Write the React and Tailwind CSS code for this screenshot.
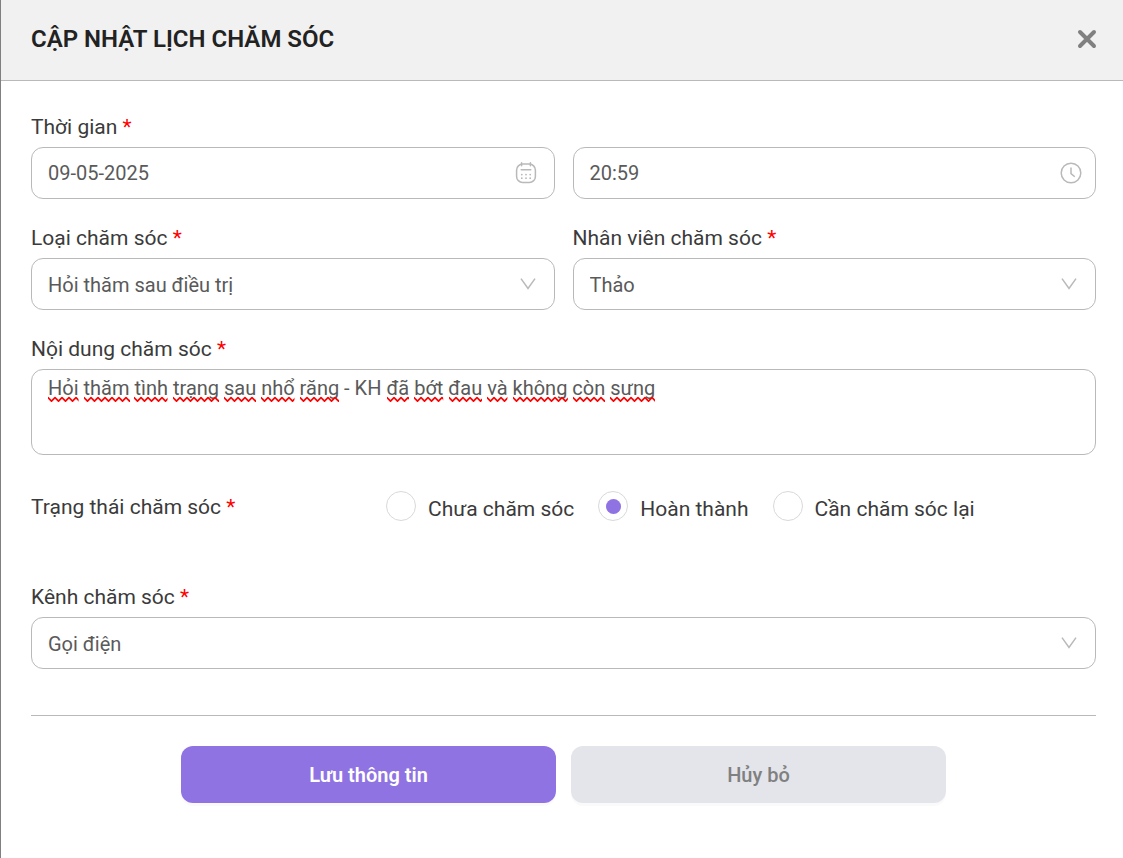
import React, { useState } from 'react';
import { clsx } from 'clsx';

const FIELD = 'block w-full rounded-xl border border-[#b9b9b9] bg-white px-4 text-[20px] text-[#5a5a5a] outline-none focus:border-[#8f73e3]';

const STATUSES = [
  { id: 'pending', label: 'Chưa chăm sóc' },
  { id: 'done', label: 'Hoàn thành' },
  { id: 'again', label: 'Cần chăm sóc lại' }
];

const CalendarIcon = () => (
  <svg width="22" height="22" viewBox="0 0 22 22" fill="none" stroke="#b9b9b9" strokeLinecap="round">
    <rect x="1.6" y="2.1" width="18.8" height="18.3" rx="6" strokeWidth="1.5" />
    <path d="M6.6 0.8v3M15.4 0.8v3M6.2 7.8h9.6" strokeWidth="1.5" />
    <path d="M6.8 12.6h.01M11 12.6h.01M15.2 12.6h.01M6.8 16.2h.01M11 16.2h.01M15.2 16.2h.01" strokeWidth="1.8" />
  </svg>
);

const ClockIcon = () => (
  <svg width="22" height="22" viewBox="0 0 22 22" fill="none" stroke="#b9b9b9" strokeWidth="1.5">
    <circle cx="11" cy="11" r="9.8" />
    <path d="M11 5.4v6.2l3.8 3.2" />
  </svg>
);

const Label = ({ htmlFor, children }) => (
  <label htmlFor={htmlFor} className="mb-2 block text-[21px] leading-6 text-[#3b3b3b]">
    {children} <span className="text-[#ff0000]">*</span>
  </label>
);

const SelectField = ({ id, label, options }) => (
  <div>
    <Label htmlFor={id}>{label}</Label>
    <div className="relative">
      <select id={id} className={clsx(FIELD, 'h-[52px] appearance-none pt-0.5 pr-12')}>
        {options.map(o => <option key={o}>{o}</option>)}
      </select>
      <svg className="pointer-events-none absolute top-5 right-[19px]" width="16" height="12" viewBox="0 0 16 12" fill="none" stroke="#b9b9b9" strokeWidth="1.5">
        <path d="M1 0.6L8 10.4L15 0.6" />
      </svg>
    </div>
  </div>
);

const Squiggle = () => (
  <svg className="absolute -bottom-[3px] left-0 h-[7px] w-full">
    <rect width="100%" height="7" fill="url(#squiggle)" />
  </svg>
);

const NoteField = ({ value, onChange }) => (
  <div className="relative">
    <textarea
      id="note"
      value={value}
      onChange={(e) => onChange(e.target.value)}
      spellCheck={false}
      className={clsx(FIELD, 'h-[86px] resize-none pt-1 leading-7')}
    />
    <svg className="absolute size-0" aria-hidden="true">
      <pattern id="squiggle" width="7" height="7" patternUnits="userSpaceOnUse">
        <path d="M-3.5 5.2L0 1.6L3.5 5.2L7 1.6L10.5 5.2" fill="none" stroke="#ff0000" strokeWidth="1.7" strokeLinejoin="round" />
      </pattern>
    </svg>
    {/* spelling marks, skips punctuation and upper-case abbreviations */}
    <div aria-hidden="true" className="pointer-events-none absolute inset-0 border border-transparent px-4 pt-1 text-[20px] leading-7 whitespace-pre-wrap text-transparent">
      {value.split(' ').map((word, i) => (
        <React.Fragment key={i}>
          {i > 0 && ' '}
          <span className="relative">
            {word}
            {word !== word.toUpperCase() && <Squiggle />}
          </span>
        </React.Fragment>
      ))}
    </div>
  </div>
);

const App = () => {
  const [date, setDate] = useState('09-05-2025');
  const [time, setTime] = useState('20:59');
  const [note, setNote] = useState('Hỏi thăm tình trạng sau nhổ răng - KH đã bớt đau và không còn sưng');
  const [status, setStatus] = useState('done');

  return (
    <div className="min-h-screen border-l border-[#808080] bg-white font-['Roboto',sans-serif]">
      <header className="flex h-[81px] items-center justify-between border-b border-[#b9b9b9] bg-[#f1f1f1] pr-[26px] pb-[2px] pl-[30px]">
        <h1 className="text-[24px] leading-8 font-semibold text-[#222222]">CẬP NHẬT LỊCH CHĂM SÓC</h1>
        <button type="button" aria-label="Đóng">
          <svg width="20" height="20" viewBox="0 0 20 20" fill="none" stroke="#808080" strokeWidth="4" strokeLinecap="round">
            <path d="M3 3L17 17M17 3L3 17" />
          </svg>
        </button>
      </header>

      <form className="pt-[34px] pr-[27px] pb-14 pl-[30px]" onSubmit={(e) => e.preventDefault()}>
        <div className="grid grid-cols-2 items-end gap-x-[18px] gap-y-[27px]">
          <div>
            <Label htmlFor="date">Thời gian</Label>
            <div className="relative">
              <input id="date" type="text" value={date} onChange={(e) => setDate(e.target.value)} className={clsx(FIELD, 'h-[52px]')} />
              <span className="pointer-events-none absolute top-[15px] right-[18px]"><CalendarIcon /></span>
            </div>
          </div>
          <div className="relative">
            <input type="text" aria-label="Giờ" value={time} onChange={(e) => setTime(e.target.value)} className={clsx(FIELD, 'h-[52px]')} />
            <span className="pointer-events-none absolute top-[15px] right-[14px]"><ClockIcon /></span>
          </div>
          <SelectField id="type" label="Loại chăm sóc" options={['Hỏi thăm sau điều trị']} />
          <SelectField id="staff" label="Nhân viên chăm sóc" options={['Thảo']} />
          <div className="col-span-2">
            <Label htmlFor="note">Nội dung chăm sóc</Label>
            <NoteField value={note} onChange={setNote} />
          </div>
        </div>

        <fieldset className="mt-9 mb-16 grid grid-cols-3">
          <legend className="float-left pt-1 text-[21px] leading-6 text-[#3b3b3b]">
            Trạng thái chăm sóc <span className="text-[#ff0000]">*</span>
          </legend>
          <div className="col-span-2 flex gap-6">
            {STATUSES.map(s => (
              <label key={s.id} className="flex items-center gap-3 text-[21px] leading-6 text-[#3b3b3b]">
                <input
                  type="radio"
                  name="status"
                  checked={status === s.id}
                  onChange={() => setStatus(s.id)}
                  className="grid size-[30px] appearance-none place-items-center rounded-full border border-[#d9d9d9] before:size-[15px] before:rounded-full checked:before:bg-[#8f73e3]"
                />
                <span className="pt-[6px]">{s.label}</span>
              </label>
            ))}
          </div>
        </fieldset>

        <SelectField id="channel" label="Kênh chăm sóc" options={['Gọi điện']} />

        <div className="mt-[46px] flex justify-center gap-[15px] border-t border-[#b9b9b9] pt-[30px]">
          <button type="submit" className="h-[57px] w-full max-w-[375px] rounded-xl bg-[#8f73e3] text-[20px] font-semibold text-white shadow-[0_3px_0_rgba(0,0,0,0.02)]">
            Lưu thông tin
          </button>
          <button type="button" className="h-[57px] w-full max-w-[375px] rounded-xl bg-[#e4e5eb] text-[20px] font-medium text-[#808080] shadow-[0_3px_0_rgba(0,0,0,0.02)]">
            Hủy bỏ
          </button>
        </div>
      </form>
    </div>
  );
};

export default App;
